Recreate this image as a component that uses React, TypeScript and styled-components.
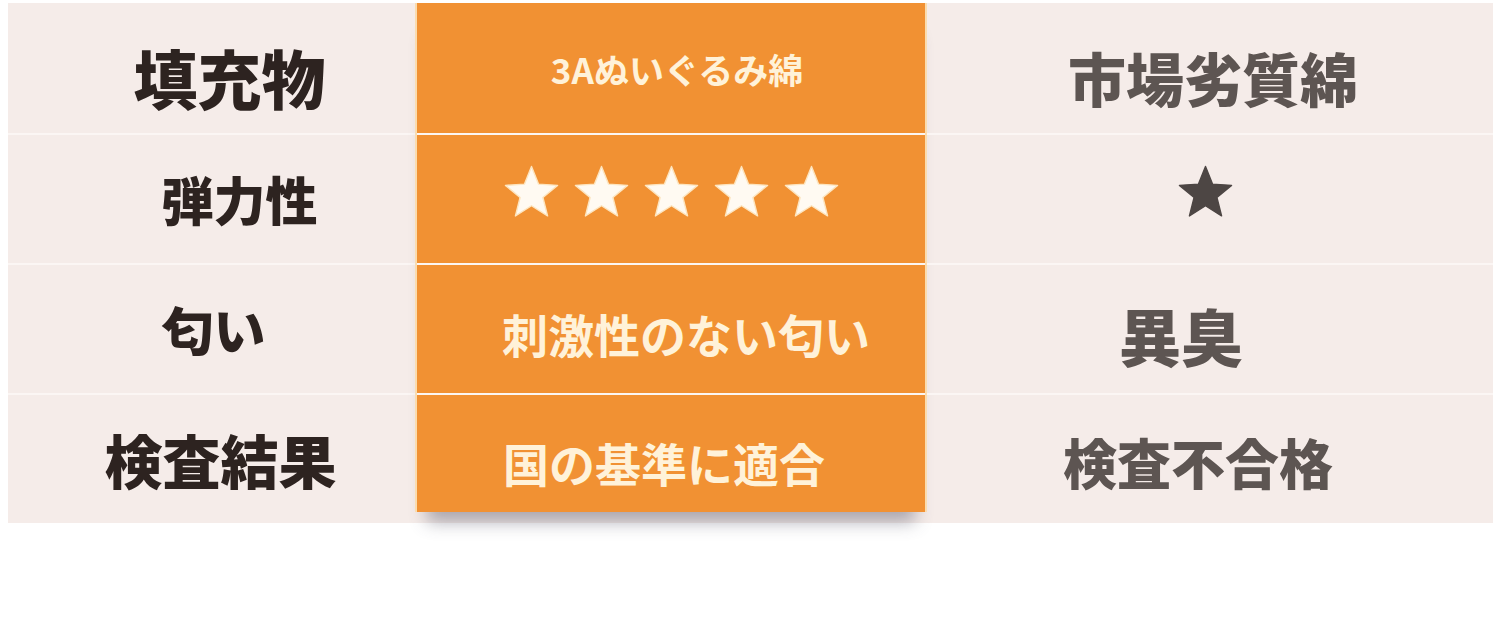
import styled, { createGlobalStyle } from 'styled-components'

const GlobalStyle = createGlobalStyle`
  body {
    margin: 0;
    background: #ffffff;
    font-family: "Noto Sans CJK JP", "Noto Sans", sans-serif;
  }
`

type Tone = 'label' | 'good' | 'bad'

interface CellSpec {
  text?: string
  stars?: number
  size: number
  dx?: number
  dy?: number
}

const labels: CellSpec[] = [
  { text: '填充物', size: 64, dx: 18, dy: 8 },
  { text: '弾力性', size: 52, dx: 28 },
  { text: '匂い', size: 52, dx: 2 },
  { text: '検査結果', size: 58, dx: 9 },
]

const ours: CellSpec[] = [
  { text: '3Aぬいぐるみ綿', size: 35, dx: 6 },
  { stars: 5, size: 57, dy: -8 },
  { text: '刺激性のない匂い', size: 46, dx: 15, dy: 4 },
  { text: '国の基準に適合', size: 46, dx: -7, dy: 8 },
]

const theirs: CellSpec[] = [
  { text: '市場劣質綿', size: 58, dx: 3, dy: 9 },
  { stars: 1, size: 57, dx: -5, dy: -8 },
  { text: '異臭', size: 62, dx: -29, dy: 6 },
  { text: '検査不合格', size: 54, dx: -12, dy: 3 },
]

// five point star, inner radius a bit fuller than the geometric one
const starPoints = Array.from({ length: 10 })
  .map((_, i) => {
    const r = i % 2 === 0 ? 48 : 21
    const a = (Math.PI / 5) * i - Math.PI / 2
    return `${(50 + r * Math.cos(a)).toFixed(1)},${(54 + r * Math.sin(a)).toFixed(1)}`
  })
  .join(' ')

function Star({ size, light }: { size: number; light: boolean }) {
  return (
    <svg width={size} height={size} viewBox="0 0 100 100">
      <polygon
        points={starPoints}
        fill={light ? '#fffaf2' : '#4d4644'}
        stroke={light ? '#fde5bf' : '#4d4644'}
        strokeWidth="2.5"
        strokeLinejoin="round"
      />
    </svg>
  )
}

function Column({ tone, cells }: { tone: Tone; cells: CellSpec[] }) {
  const Wrap = tone === 'label' ? LabelColumn : tone === 'good' ? OrangeColumn : PlainColumn
  return (
    <Wrap>
      {cells.map((c, i) => (
        <Cell key={i} $tone={tone} $dx={c.dx ?? 0} $dy={c.dy ?? 0} $last={i === cells.length - 1}>
          {c.stars ? (
            <Stars>
              {Array.from({ length: c.stars }).map((_, k) => (
                <Star key={k} size={c.size} light={tone === 'good'} />
              ))}
            </Stars>
          ) : (
            <CellText $tone={tone} $size={c.size}>
              {c.text}
            </CellText>
          )}
        </Cell>
      ))}
    </Wrap>
  )
}

export default function App() {
  return (
    <>
      <GlobalStyle />
      <Page>
        <Table>
          <Column tone="label" cells={labels} />
          <Column tone="good" cells={ours} />
          <Column tone="bad" cells={theirs} />
        </Table>
      </Page>
    </>
  )
}

const Page = styled.div`
  padding: 3px 7px 0 8px;
  height: 629px;
`

const Table = styled.div`
  display: flex;
  align-items: flex-start;
  width: 1485px;
  height: 520px;
  background: #f5ece9;
`

const LabelColumn = styled.div`
  display: flex;
  flex-direction: column;
  width: 407px;
`

const PlainColumn = styled.div`
  display: flex;
  flex-direction: column;
  flex: 1;
`

const OrangeColumn = styled.div`
  display: flex;
  flex-direction: column;
  width: 512px;
  box-sizing: border-box;
  background: #f19133;
  border-left: 2px solid #fbdcae;
  border-right: 2px solid #fbdcae;
  box-shadow: 0 22px 16px -12px rgba(80, 80, 100, 0.45);
`

const Cell = styled.div<{ $tone: Tone; $dx: number; $dy: number; $last: boolean }>`
  box-sizing: border-box;
  display: flex;
  align-items: center;
  justify-content: center;
  height: ${({ $tone, $last }) => ($tone === 'good' && $last ? 119 : 130)}px;
  padding-left: ${({ $dx }) => Math.max(0, $dx * 2)}px;
  padding-right: ${({ $dx }) => Math.max(0, -$dx * 2)}px;
  padding-top: ${({ $dy }) => Math.max(0, $dy * 2)}px;
  padding-bottom: ${({ $dy }) => Math.max(0, -$dy * 2)}px;

  & + & {
    border-top: 2px solid
      ${({ $tone }) => ($tone === 'good' ? '#f9c587' : '#fbf6f4')};
  }
`

const CellText = styled.span<{ $tone: Tone; $size: number }>`
  font-size: ${({ $size }) => $size}px;
  line-height: 1;
  white-space: nowrap;
  font-weight: ${({ $tone }) => ($tone === 'good' ? 700 : 900)};
  color: ${({ $tone }) =>
    $tone === 'label' ? '#2d2320' : $tone === 'good' ? '#fff2d9' : '#5d5552'};
`

const Stars = styled.div`
  display: flex;
  gap: 13px;
`
